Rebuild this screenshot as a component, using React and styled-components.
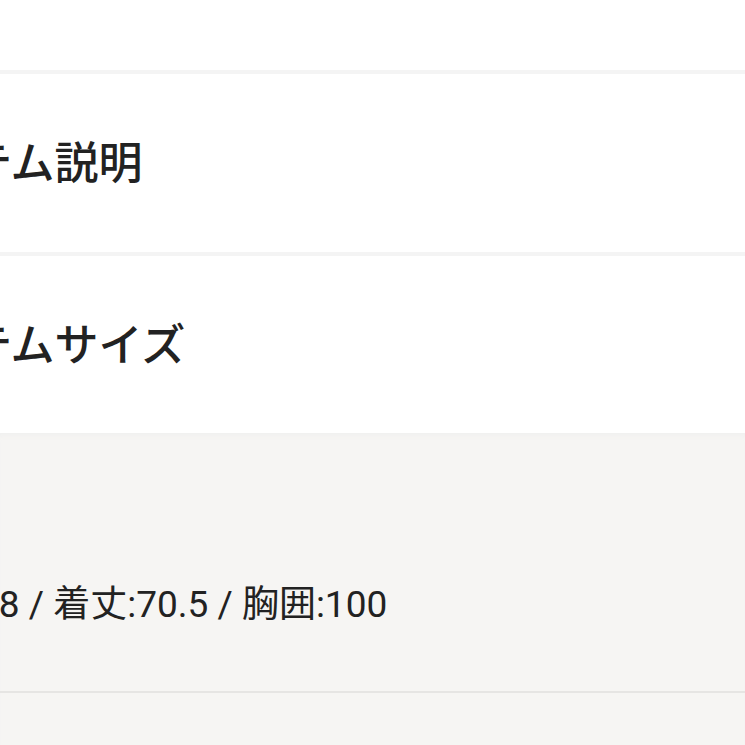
import styled, { createGlobalStyle } from "styled-components";

const GlobalStyle = createGlobalStyle`
  html, body {
    margin: 0;
    padding: 0;
    background: #ffffff;
    overflow: hidden;
  }
  body {
    font-family: Roboto, "Noto Sans CJK JP", sans-serif;
    color: #222222;
  }
`;

const Page = styled.div`
  width: 745px;
  height: 745px;
  overflow: hidden;
  display: flex;
  flex-direction: column;
`;

const Spacer = styled.div`
  height: 70px;
  background: #ffffff;
`;

const Divider = styled.div`
  height: ${(props) => props.size || 4}px;
  background: ${(props) => props.color || "#f4f4f4"};
`;

const Section = styled.div`
  height: ${(props) => props.height}px;
  background: #ffffff;
  display: flex;
  align-items: center;
`;

const SectionTitle = styled.h2`
  margin: 0 0 6px -117px;
  font-family: "Noto Sans CJK JP", sans-serif;
  font-size: 44px;
  font-weight: 500;
  line-height: 1;
  white-space: nowrap;
  color: #222222;
`;

const Detail = styled.div`
  flex: 1;
  background: #f6f5f3;
  display: flex;
  flex-direction: column;
  box-shadow: inset 0 6px 6px -4px #efefef;
`;

const SizeRow = styled.div`
  height: 258px;
  display: flex;
  align-items: center;
`;

const SizeText = styled.p`
  margin: 84px 0 0 -105px;
  font-size: 37px;
  line-height: 1;
  white-space: nowrap;
  color: #222222;
`;

const App = () => {
  return (
    <Page>
      <GlobalStyle />
      <Spacer />
      <Divider />
      <Section height={178}>
        <SectionTitle>アイテム説明</SectionTitle>
      </Section>
      <Divider />
      <Section height={177}>
        <SectionTitle>アイテムサイズ</SectionTitle>
      </Section>
      <Detail>
        <SizeRow>
          <SizeText>身幅:58 / 着丈:70.5 / 胸囲:100</SizeText>
        </SizeRow>
        <Divider size={2} color="#e6e5e3" />
      </Detail>
    </Page>
  );
};

export default App;
